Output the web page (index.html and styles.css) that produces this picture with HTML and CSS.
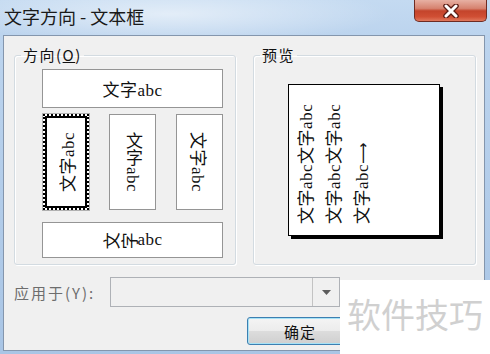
FILE: index.html
```html
<!DOCTYPE html>
<html lang="zh-CN">
<head>
    <meta charset="UTF-8">
    <title>文字方向 - 文本框</title>
    <link rel="stylesheet" href="styles.css">
</head>
<body>
    <div class="window">
        <div class="titlebar">
            <span class="title">文字方向 - 文本框</span>
            <button class="close" title="关闭">
                <svg width="18" height="14" viewBox="0 0 18 14">
                    <path d="M4 2 L14 12 M14 2 L4 12" stroke="#5a1c14" stroke-width="5.5" stroke-linecap="round"/>
                    <path d="M4 2 L14 12 M14 2 L4 12" stroke="#ffffff" stroke-width="3" stroke-linecap="round"/>
                </svg>
            </button>
        </div>

        <div class="client">
            <div class="groups">
                <fieldset class="group group-dir">
                    <legend>方向(<u>O</u>)</legend>
                    <div class="options">
                        <div class="opt opt-h">文字abc</div>
                        <div class="opt-cols">
                            <div class="opt opt-v selected"><span class="txt-up">文字abc</span></div>
                            <div class="opt opt-v"><span class="txt-stack">文字abc</span></div>
                            <div class="opt opt-v"><span class="txt-down">文字abc</span></div>
                        </div>
                        <div class="opt opt-h opt-last"><span class="rot">文</span><span class="rot">字</span>abc</div>
                    </div>
                </fieldset>

                <fieldset class="group group-preview">
                    <legend>预览</legend>
                    <div class="page">
                        <div class="page-text">
                            <div>文字abc文字abc</div>
                            <div>文字abc文字abc</div>
                            <div>文字abc<span class="arrow">⟶</span></div>
                        </div>
                    </div>
                </fieldset>
            </div>

            <div class="apply-row">
                <label class="apply-label">应用于(Y):</label>
                <div class="combo">
                    <span class="combo-btn">
                        <svg width="9" height="5" viewBox="0 0 9 5"><path d="M0 0 H9 L4.5 5 Z" fill="#5c5c5c"/></svg>
                    </span>
                </div>
            </div>

            <div class="button-row">
                <button class="ok">确定</button>
            </div>
        </div>

        <div class="watermark">软件技巧</div>
    </div>
</body>
</html>
```

FILE: styles.css
```css
body {
    margin: 0;
    width: 490px;
    height: 354px;
    overflow: hidden;
    font-family: "Noto Sans CJK SC", sans-serif;
}
.window {
    position: relative;
    height: 354px;
    display: flex;
    flex-direction: column;
    background:
        radial-gradient(ellipse 220px 30px at 170px 14px, rgba(255,255,255,0.55), rgba(255,255,255,0)),
        linear-gradient(180deg, #c4daf1 0%, #bcd4ee 35px, #a9c5e5 100%);
}
.titlebar {
    height: 35px;
    display: flex;
    justify-content: space-between;
    align-items: flex-start;
}
.title {
    margin: 5px 0 0 4px;
    font-size: 18px;
    line-height: 22px;
    color: #1a1a1a;
}
.close {
    width: 73px;
    height: 22px;
    margin-right: 3px;
    padding: 0;
    border: 1px solid #6e2b22;
    border-top: none;
    border-radius: 0 0 5px 5px;
    background: linear-gradient(180deg, #e7b0a3 0%, #d6826f 40%, #c4442b 52%, #d04f34 80%, #e0785c 100%);
    display: flex;
    align-items: center;
    justify-content: center;
}
.client {
    flex: 1;
    margin: 0 5px 3px 3px;
    border: 1px solid #8496ad;
    background: #f0f0f0;
}
.groups {
    display: flex;
    gap: 17px;
    margin-top: 11px;
    padding-left: 10px;
}
.group {
    margin: 0;
    padding: 0 0 6px 6px;
    border: 1px solid #d3dbe1;
    border-radius: 3px;
    box-shadow: inset 1px 1px 0 #fff, 1px 1px 0 #fff;
    box-sizing: border-box;
}
.group legend {
    padding: 0 2px;
    font-size: 15px;
    line-height: 16px;
    letter-spacing: 1.5px;
    color: #111;
}
.group-dir {
    width: 222px;
}
.group-preview {
    width: 223px;
}
.options {
    margin: 6px 0 0 21px;
    width: 181px;
    font-family: "Liberation Serif", "Noto Sans CJK SC", serif;
    font-size: 17px;
    letter-spacing: 0.5px;
    color: #111;
}
.opt {
    background: #fff;
    border: 1px solid #959595;
    box-sizing: border-box;
    display: flex;
    align-items: center;
    justify-content: center;
}
.opt-h {
    height: 39px;
}
.opt-last {
    height: 36px;
    margin-top: 12px;
}
.opt-cols {
    display: grid;
    grid-template-columns: 46px 47px 47px;
    column-gap: 20px;
    padding-left: 1px;
    margin-top: 6px;
    height: 96px;
}
.opt-v.selected {
    border: 2px dotted #000;
    box-shadow: inset 0 0 0 2px #000, 0 0 0 1px #b0b0b0;
}
.txt-up {
    writing-mode: vertical-rl;
    text-orientation: sideways;
    transform: rotate(180deg);
}
.txt-stack {
    writing-mode: vertical-rl;
}
.txt-down {
    writing-mode: vertical-rl;
    text-orientation: sideways;
}
.rot {
    display: inline-block;
    transform: rotate(-90deg);
}
.page {
    width: 152px;
    height: 152px;
    margin: 21px 0 0 28px;
    border: 1px solid #000;
    box-sizing: border-box;
    background: #fff;
    box-shadow: 3px 3px 0 #000;
}
.page-text {
    height: 100%;
    box-sizing: border-box;
    padding: 11px 4px 0 0;
    writing-mode: vertical-rl;
    text-orientation: sideways;
    transform: rotate(180deg);
    font-family: "Liberation Serif", "Noto Sans CJK SC", serif;
    font-size: 17px;
    letter-spacing: 0.5px;
    line-height: 28px;
    color: #111;
}
.arrow {
    font-family: "DejaVu Sans", sans-serif;
    font-size: 15px;
}
.apply-row {
    display: flex;
    align-items: center;
    margin-top: 12px;
    padding-left: 10px;
}
.apply-label {
    width: 96px;
    font-size: 15px;
    letter-spacing: 2px;
    color: #6d6d6d;
}
.combo {
    width: 230px;
    height: 30px;
    box-sizing: border-box;
    border: 1px solid #aeb1b6;
    background: #f0f0f0;
    display: flex;
    justify-content: flex-end;
}
.combo-btn {
    width: 26px;
    border-left: 1px solid #c3c3c3;
    display: flex;
    align-items: center;
    justify-content: center;
}
.button-row {
    margin-top: 10px;
    padding-left: 243px;
}
.ok {
    width: 106px;
    height: 28px;
    padding: 0;
    border: 1px solid #3c7fb1;
    border-radius: 3px;
    background: linear-gradient(180deg, #f4f4f4 0%, #ececec 48%, #dcdcdc 52%, #cfcfcf 100%);
    box-shadow: inset 0 0 0 1px #a6e2f6;
    font-family: "Noto Sans CJK SC", sans-serif;
    font-size: 15px;
    letter-spacing: 1px;
    color: #111;
}
.watermark {
    position: absolute;
    left: 340px;
    top: 280px;
    right: 0;
    bottom: 0;
    background: #fff;
    padding: 10px 0 0 7px;
    font-size: 34px;
    line-height: 48px;
    color: #d0d0d0;
}
```
